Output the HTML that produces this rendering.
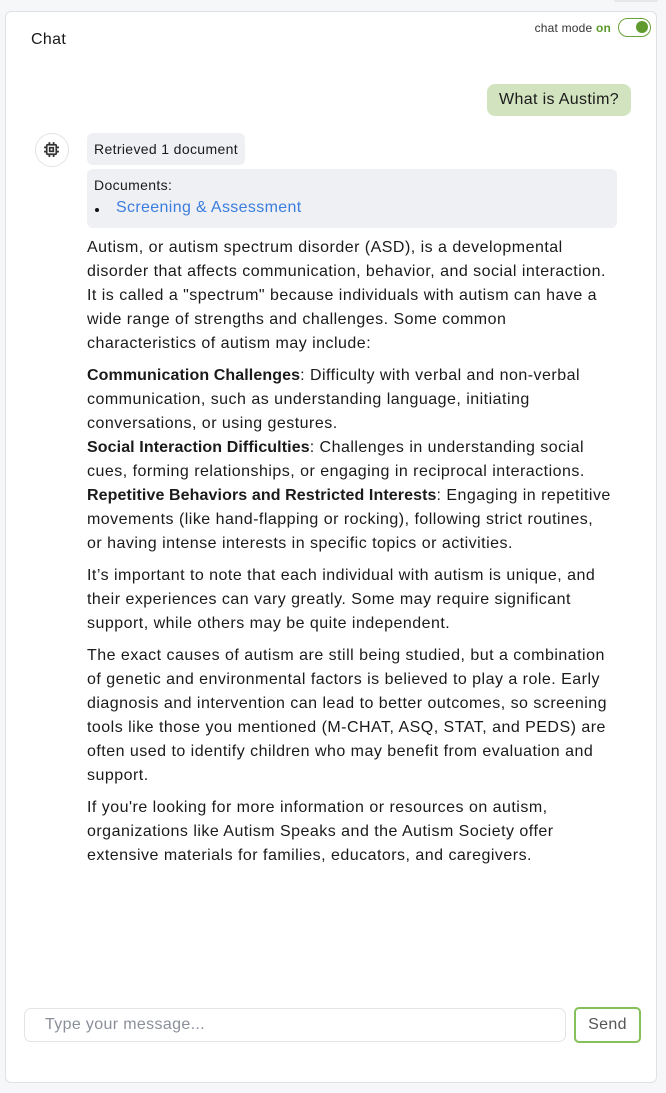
<!DOCTYPE html>
<html><head><style>
body{margin:0;background:#f6f7f9;font-family:"Liberation Sans",sans-serif;width:666px;height:1093px;overflow:hidden;position:relative;color:#1a1a1a;letter-spacing:0.35px}
.tab{position:absolute;left:614px;top:-2px;width:44px;height:4px;background:#e5e7eb;border-radius:2px}
.card{position:absolute;left:5px;top:11px;width:650px;height:1070px;background:#fff;border:1.5px solid #dfe1e6;border-radius:6px}
.title{position:absolute;left:25px;top:19px;font-size:16px}
.mode{position:absolute;right:45px;top:9px;font-size:12px;color:#333;letter-spacing:0.2px}
.mode b{color:#5a9a2a}
.tog{position:absolute;left:612px;top:6px;width:33px;height:19px;border:1.5px solid #6aa23a;border-radius:10px;box-sizing:border-box}
.tog i{position:absolute;right:2px;top:2px;width:12px;height:12px;border-radius:50%;background:#5f9a2e}
.user{position:absolute;right:25px;top:72px;background:#d1e3bf;border-radius:8px;padding:0 12px;height:32px;line-height:32px;font-size:16px}
.av{position:absolute;left:29px;top:121px;width:34px;height:34px;border:1.5px solid #e2e3e8;border-radius:50%;box-sizing:border-box}
.av svg{position:absolute;left:7px;top:7px}
.ret{position:absolute;left:81px;top:121px;background:#eff0f3;border-radius:6px;padding:0 7px;height:32px;line-height:32px;font-size:14px}
.docs{position:absolute;left:81px;top:157px;width:530px;height:59px;background:#eff0f3;border-radius:6px;font-size:14px}
.docs .l{position:absolute;left:7px;top:8px}
.docs .b{position:absolute;left:8px;top:39px;width:4px;height:4px;background:#111;border-radius:50%}
.docs a{position:absolute;left:29px;top:30px;color:#3b7de0;font-size:16px;text-decoration:none}
.body{position:absolute;left:81px;top:224px;width:530px;font-size:16px;line-height:24px;letter-spacing:0.48px}
.body b{letter-spacing:0.1px}
.body p{margin:0 0 8px}
.inp{position:absolute;left:18px;top:996px;width:542px;height:34px;border:1px solid #e3e4e8;border-radius:7px;box-sizing:border-box;font-size:16px;color:#8a8f9a;padding-left:20px;line-height:32px}
.send{position:absolute;left:568px;top:995px;width:67px;height:36px;border:2px solid #86c05a;border-radius:5px;box-sizing:border-box;text-align:center;line-height:32px;font-size:16px;color:#555}
</style></head><body>
<div class="tab"></div>
<div class="card">
<div class="title">Chat</div>
<div class="mode">chat mode <b>on</b></div>
<div class="tog"><i></i></div>
<div class="user">What is Austim?</div>
<div class="av"><svg width="17" height="17" viewBox="0 0 16 16" fill="none" stroke="#333" stroke-width="1.6"><rect x="3.5" y="3.5" width="9" height="9" rx="1"/><rect x="6.3" y="6.3" width="3.4" height="3.4"/><path d="M6 1v2.5M10 1v2.5M6 12.5V15M10 12.5V15M1 6h2.5M1 10h2.5M12.5 6H15M12.5 10H15"/></svg></div>
<div class="ret">Retrieved 1 document</div>
<div class="docs"><span class="l">Documents:</span><span class="b"></span><a>Screening &amp; Assessment</a></div>
<div class="body">
<p>Autism, or autism spectrum disorder (ASD), is a developmental disorder that affects communication, behavior, and social interaction. It is called a "spectrum" because individuals with autism can have a wide range of strengths and challenges. Some common characteristics of autism may include:</p>
<p><b>Communication Challenges</b>: Difficulty with verbal and non-verbal communication, such as understanding language, initiating conversations, or using gestures.<br><b>Social Interaction Difficulties</b>: Challenges in understanding social cues, forming relationships, or engaging in reciprocal interactions.<br><b>Repetitive Behaviors and Restricted Interests</b>: Engaging in repetitive movements (like hand-flapping or rocking), following strict routines,<br>or having intense interests in specific topics or activities.</p>
<p>It’s important to note that each individual with autism is unique, and their experiences can vary greatly. Some may require significant support, while others may be quite independent.</p>
<p>The exact causes of autism are still being studied, but a combination of genetic and environmental factors is believed to play a role. Early diagnosis and intervention can lead to better outcomes, so screening tools like those you mentioned (M-CHAT, ASQ, STAT, and PEDS) are often used to identify children who may benefit from evaluation and support.</p>
<p>If you're looking for more information or resources on autism, organizations like Autism Speaks and the Autism Society offer extensive materials for families, educators, and caregivers.</p>
</div>
<div class="inp">Type your message...</div>
<div class="send">Send</div>
</div>
</body></html>
